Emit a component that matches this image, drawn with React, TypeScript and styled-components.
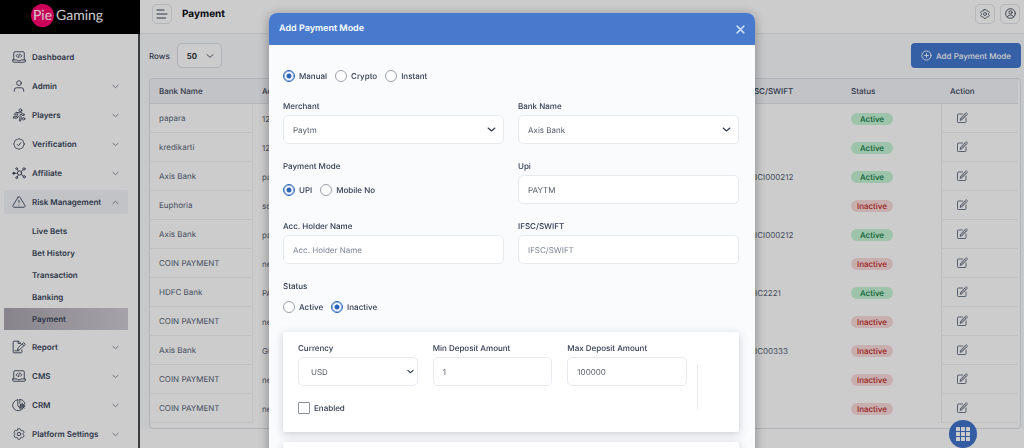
import React from "react";
import styled, { createGlobalStyle, css } from "styled-components";
import { HiOutlineCheckBadge, HiOutlineCog6Tooth } from "react-icons/hi2";
import { FiAlertTriangle, FiUser } from "react-icons/fi";

const Global = createGlobalStyle`
  *, *::before, *::after { box-sizing: border-box; }
  html { height: 100%; }
  body {
    margin: 0;
    min-height: 100%;
    background: #fff;
    overflow: hidden;
    font-family: Inter, "Liberation Sans", sans-serif;
    font-size: 8px;
    line-height: 12px;
    color: #3a4458;
    text-rendering: geometricPrecision;
  }
  #root { height: 100vh; }
  button, input, select { font: inherit; color: inherit; margin: 0; text-rendering: inherit; }
  ul { list-style: none; margin: 0; padding: 0; }
  svg { display: block; flex: none; }
`;

/* ---------- shell ---------- */

const Shell = styled.div`
  display: flex;
  height: 100vh;
  overflow: hidden;
`;

const Sidebar = styled.aside`
  flex: none;
  width: 140px;
  border-right: 2px solid #4c4c4e;
  background: #fff;
`;

const Brand = styled.a`
  display: flex;
  align-items: center;
  gap: 2px;
  height: 34px;
  margin-right: -2px;
  padding: 0 0 4px 31px;
  background: #000;
  color: #fff;
  text-decoration: none;
  font-family: Lato, sans-serif;
  font-size: 14px;
  line-height: 16px;
`;

const BrandMark = styled.span`
  display: flex;
  align-items: center;
  justify-content: center;
  width: 23px;
  height: 23px;
  border-radius: 50%;
  background: #ff0070;
`;

const NavList = styled.ul`
  && {
    display: flex;
    flex-direction: column;
    gap: 5px;
    padding: 11px 10px 0 4px;
  }
`;

const NavButton = styled.button<{ $open?: boolean }>`
  display: flex;
  align-items: center;
  width: 100%;
  height: 24px;
  padding: 0 9px 0 8px;
  border: 0;
  border-radius: 2px;
  background: ${(p) => (p.$open ? "#f3f4f8" : "transparent")};
  font-weight: 600;
  text-align: left;
  white-space: nowrap;

  & > span { flex: 1; margin-left: 6px; }
`;

const SubList = styled.ul`
  && { padding-top: 1px; }
`;

const SubLink = styled.a<{ $active?: boolean }>`
  display: flex;
  align-items: center;
  height: 22px;
  padding-left: 28px;
  color: inherit;
  font-weight: 600;
  text-decoration: none;
  ${(p) =>
    p.$active &&
    css`
      background: linear-gradient(90deg, #a9a5ae, #cfccd4);
    `}
`;

const Main = styled.main`
  flex: 1;
  min-width: 0;
  background: #fff;
`;

const TopBar = styled.header`
  display: flex;
  align-items: center;
  gap: 5px;
  height: 34px;
  padding: 0 4px 6px 12px;
  border-bottom: 1px solid #ececf0;
`;

const IconButton = styled.button`
  display: flex;
  align-items: center;
  justify-content: center;
  width: 20px;
  height: 20px;
  padding: 0;
  border: 1px solid #e4e5ea;
  border-radius: 5px;
  background: transparent;
`;

const PageTitle = styled.h1`
  flex: 1;
  margin: 0 0 0 5px;
  font-size: 10px;
  line-height: 16px;
  font-weight: 700;
  color: #0b0b14;
`;

const Content = styled.section`
  padding: 9px 3px 0 9px;
  background: #f8fafc;
`;

const Toolbar = styled.div`
  display: flex;
  align-items: center;
  justify-content: space-between;
  margin-bottom: 10px;
`;

const RowsLabel = styled.label`
  display: flex;
  align-items: center;
  gap: 7px;
  font-weight: 500;
`;

const AddButton = styled.button`
  display: flex;
  align-items: center;
  gap: 4px;
  height: 25px;
  padding: 0 10px;
  border: 0;
  border-radius: 4px;
  background: #4478d0;
  color: #fff;
  font-weight: 500;
  white-space: nowrap;
`;

/* ---------- table ---------- */

const TableCard = styled.div`
  padding: 0 2px 5px 0;
  border: 1px solid #dfe0e6;
  border-radius: 4px;
  background: #fff;
  overflow: hidden;
`;

const Table = styled.table`
  width: 100%;
  border-collapse: separate;
  border-spacing: 0;
  table-layout: fixed;
`;

const Th = styled.th`
  height: 25px;
  padding: 0 0 0 9px;
  background: #f3f4f9;
  border-bottom: 1px solid #e3e4ea;
  font-weight: 500;
  text-align: left;
  white-space: nowrap;
`;

const Td = styled.td`
  height: 29px;
  padding: 0 0 0 9px;
  font-weight: 400;
  color: #566074;
  white-space: nowrap;
`;

const edge = css`
  border-bottom: 1px solid #f3f3f6;
`;
const FirstTd = styled(Td)`
  ${edge}
  border-right: 1px solid #f3f3f6;
`;
const LastTd = styled(Td)`
  ${edge}
  border-left: 1px solid #ececf0;
`;

const Pill = styled.span<{ $active: boolean }>`
  display: block;
  width: 42px;
  border-radius: 6px;
  text-align: center;
  font-weight: 500;
  line-height: 12px;
  background: ${(p) => (p.$active ? "#c5f4d5" : "#fbdbdb")};
  color: ${(p) => (p.$active ? "#0d7a45" : "#c01f24")};
`;

const EditButton = styled.button`
  display: block;
  margin-left: 5px;
  padding: 0;
  border: 0;
  background: transparent;
  color: #566074;
`;

const Fab = styled.button`
  position: fixed;
  right: 47px;
  bottom: 0;
  display: flex;
  align-items: center;
  justify-content: center;
  width: 28px;
  height: 28px;
  padding: 0;
  border: 0;
  border-radius: 50%;
  background: #4074cc;
  color: #fff;
`;

/* ---------- dialog ---------- */

const Overlay = styled.div`
  position: fixed;
  inset: 0;
  display: flex;
  justify-content: center;
  align-items: flex-start;
  padding-top: 13px;
  background: rgba(0, 0, 0, 0.2);
  overflow: hidden;
`;

const Dialog = styled.div`
  width: calc(100% - 32px);
  max-width: 486px;
  border-radius: 8px;
  background: #fafbfd;
  box-shadow: 0 2px 12px rgba(0, 0, 0, 0.35);
  color: #2f3a4f;
`;

const DialogHead = styled.div`
  display: flex;
  align-items: center;
  justify-content: space-between;
  height: 32px;
  padding: 0 10px;
  border-radius: 8px 8px 0 0;
  background: #477acd;
  color: #fff;
`;

const DialogTitle = styled.h2`
  margin: 0;
  font-size: 9px;
  line-height: 14px;
  font-weight: 600;
`;

const CloseButton = styled.button`
  padding: 0;
  border: 0;
  background: transparent;
  color: #cfdef8;
`;

const Form = styled.form`
  padding: 25px 16px 20px 14px;
`;

const RadioRow = styled.div<{ $height: number }>`
  display: flex;
  align-items: center;
  gap: 8px;
  height: ${(p) => p.$height}px;
`;

const RadioLabel = styled.label`
  display: flex;
  align-items: center;
  gap: 4px;
  font-weight: 500;
`;

const Radio = styled.input`
  appearance: none;
  width: 12px;
  height: 12px;
  border: 1px solid #9a9fa8;
  border-radius: 50%;
  background: #fff;

  &:checked {
    border-color: #2a62b8;
    background: radial-gradient(circle, #2a62b8 0 2px, #fff 3px);
    box-shadow: inset 0 0 0 1px #8eaddc;
  }
`;

const FieldGrid = styled.div`
  display: grid;
  grid-template-columns: 1fr 1fr;
  gap: 16px 14px;
  margin: 18px 0 13px;
`;

const Field = styled.div`
  min-width: 0;
`;

const Caption = styled.label`
  display: block;
  margin-bottom: 3px;
  font-weight: 500;
`;

const box = css`
  width: 100%;
  height: 29px;
  padding: 0 9px;
  border: 1px solid #e6e9ee;
  border-radius: 5px;
  background: #fff;
  color: #555c69;
  outline: none;
`;

const TextInput = styled.input`
  ${box}
  &::placeholder { color: #7b8494; opacity: 1; }
`;

const SelectWrap = styled.div<{ $right: number }>`
  position: relative;
  display: flex;
  align-items: center;

  & > svg {
    position: absolute;
    right: ${(p) => p.$right}px;
    pointer-events: none;
  }
`;

const Select = styled.select<{ $inset?: boolean }>`
  ${box}
  appearance: none;
  padding-left: ${(p) => (p.$inset ? 12 : 9)}px;
`;

const RowsSelect = styled(Select)`
  width: 45px;
  height: 25px;
  border-color: #dddfe5;
  font-weight: 600;
  color: #15171f;
`;

const CurrencyCard = styled.section`
  display: grid;
  grid-template-columns: 1fr 42px;
  min-height: 100px;
  margin-bottom: 10px;
  padding: 10px 0 18px 15px;
  border-radius: 2px;
  background: #fff;
  box-shadow: 0 2px 9px rgba(30, 40, 60, 0.22);
`;

const CurrencyFields = styled.div`
  display: grid;
  grid-template-columns: repeat(3, 1fr);
  gap: 15px;
  padding-right: 10px;
`;

const Divider = styled.div`
  height: 46px;
  margin-top: 22px;
  border-left: 1px solid #e9ebf0;
`;

const CheckLabel = styled.label`
  display: flex;
  align-items: center;
  gap: 4px;
  font-weight: 500;
`;

const Checkbox = styled.input`
  appearance: none;
  width: 12px;
  height: 12px;
  border: 1px solid #8f96a3;
  border-radius: 1px;
  background: #fff;
`;

/* ---------- icons ---------- */

type GlyphProps = { size?: number; weight?: number; children: React.ReactNode };
const Glyph = ({ size = 14, weight = 1.5, children }: GlyphProps) => (
  <svg width={size} height={size} viewBox="0 0 24 24" fill="none" stroke="currentColor"
    strokeWidth={weight} strokeLinecap="round" strokeLinejoin="round" aria-hidden="true">
    {children}
  </svg>
);

const Chevron = ({ up, size = 8, weight = 2 }: { up?: boolean; size?: number; weight?: number }) => (
  <Glyph size={size} weight={weight}>
    <path d={up ? "M3 16l9-8 9 8" : "M3 8l9 8 9-8"} />
  </Glyph>
);

const LaptopCode = () => (
  <Glyph>
    <path d="M3 17V5a2 2 0 0 1 2-2h14a2 2 0 0 1 2 2v12M1 17h8l1 1.5h4l1-1.5h8v2a2 2 0 0 1-2 2H3a2 2 0 0 1-2-2z" />
    <path d="M9.500 7.500L7 10l2.500 2.500M14.500 7.500L17 10l-2.500 2.500M12.700 7l-1.400 6" />
  </Glyph>
);

const Runner = () => (
  <Glyph weight={1.6}>
    <circle cx="14.500" cy="4" r="2.400" />
    <path d="M12.500 8L7 7.500 3.500 11l1.500 1.500L8 10h2l-2.500 5H2.500v2.300h6.300l2-3.300 3 2.700-1.300 5 2.200.8 1.800-6.700-3-3.300 1.500-2.500 2 2.500h4V10.200h-3L15.500 7z" />
    <circle cx="20" cy="18.500" r="2" />
  </Glyph>
);

const Network = () => (
  <Glyph>
    <circle cx="13" cy="12" r="3.600" />
    <circle cx="3" cy="12.500" r="1.700" fill="currentColor" />
    <circle cx="8" cy="4.500" r="1.600" />
    <circle cx="20.500" cy="5" r="2" />
    <circle cx="21" cy="18.500" r="2" />
    <circle cx="8" cy="20" r="1.600" />
    <path d="M4.700 12.500h4.700M9 6l2 3M15.600 9.500l3.300-3M15.800 14.400l3.600 2.900M9 18.600l2-3.300" />
  </Glyph>
);

const FilePen = () => (
  <Glyph>
    <path d="M14 6V4.500L11.500 2H3.500A1.500 1.500 0 0 0 2 3.500v17A1.500 1.500 0 0 0 3.500 22h12a1.500 1.500 0 0 0 1.500-1.500V17M10.500 2.500V6H14" />
    <path d="M9.500 17l1-4L20 4.500l3 3L13.500 16zM17.500 7l3 3M5 18.500h7" />
  </Glyph>
);

const PieGear = () => (
  <Glyph>
    <path d="M10 3a9.500 9.500 0 1 0 6 17.300M10 3v10l5 6.500M13.500 2.500a9 9 0 0 1 8.500 7.500M13.500 2.500V9" />
    <circle cx="17.500" cy="14" r="1.600" />
    <path d="M17.500 9v1.500M17.500 17.500V19M13 14h1.300M20.700 14H22M14.300 10.800l1 1M19.800 16.300l1 1M20.700 10.800l-1 1M15.300 16.300l-1 1" />
    <circle cx="17.500" cy="14" r="3.500" />
  </Glyph>
);

const Pencil = () => (
  <Glyph size={12} weight={1.7}>
    <path d="M13 4H4.500A1.500 1.500 0 0 0 3 5.500v14A1.500 1.500 0 0 0 4.500 21h14a1.500 1.500 0 0 0 1.500-1.500V12" />
    <path d="M8.500 16l.7-3.700L19.500 2.200a1.500 1.500 0 0 1 2.200 0l.5.5a1.500 1.500 0 0 1 0 2.200L12.200 15.200zM17.300 4.500l2.700 2.700M10 15l7-7" />
  </Glyph>
);

const GridDots = () => (
  <svg width="14" height="14" viewBox="0 0 14 14" fill="currentColor" aria-hidden="true">
    {[0, 5, 10].map((y) => [0, 5, 10].map((x) => <rect key={`${x}-${y}`} x={x} y={y} width="4" height="4" rx="0.500" />))}
  </svg>
);

/* ---------- data ---------- */

const before = [
  { label: "Dashboard", icon: <LaptopCode />, leaf: true },
  { label: "Admin", icon: <FiUser size={14} strokeWidth={1.5} /> },
  { label: "Players", icon: <Runner /> },
  { label: "Verification", icon: <HiOutlineCheckBadge size={14} /> },
  { label: "Affiliate", icon: <Network /> },
];
const after = [
  { label: "Report", icon: <FilePen /> },
  { label: "CMS", icon: <LaptopCode /> },
  { label: "CRM", icon: <PieGear /> },
  { label: "Platform Settings", icon: <HiOutlineCog6Tooth size={14} /> },
];
const children = ["Live Bets", "Bet History", "Transaction", "Banking", "Payment"];

const rows: [string, string, string, boolean][] = [
  ["papara", "1234", "", true],
  ["kredikarti", "1234", "", true],
  ["Axis Bank", "paytm", "ICICI000212", true],
  ["Euphoria", "sol", "", false],
  ["Axis Bank", "paytm", "ICICI000212", true],
  ["COIN PAYMENT", "new", "", false],
  ["HDFC Bank", "PAY", "ICIC2221", true],
  ["COIN PAYMENT", "new", "", false],
  ["Axis Bank", "GOV", "ICIC00333", false],
  ["COIN PAYMENT", "new", "", false],
  ["COIN PAYMENT", "new", "", false],
];

type NavEntry = { label: string; icon: React.ReactNode; leaf?: boolean };
const NavItem = ({ label, icon, leaf }: NavEntry) => (
  <li>
    <NavButton type="button">
      {icon}
      <span>{label}</span>
      {!leaf && <Chevron size={7} />}
    </NavButton>
  </li>
);

const RadioOption = ({ name, label, checked }: { name: string; label: string; checked?: boolean }) => (
  <RadioLabel>
    <Radio type="radio" name={name} defaultChecked={checked} />
    {label}
  </RadioLabel>
);

const TextField = ({ id, label, ...rest }: { id: string; label: string } & React.InputHTMLAttributes<HTMLInputElement>) => (
  <Field>
    <Caption htmlFor={id}>{label}</Caption>
    <TextInput id={id} type="text" {...rest} />
  </Field>
);

const SelectField = ({ id, label, value, small }: { id: string; label: string; value: string; small?: boolean }) => (
  <Field>
    <Caption htmlFor={id}>{label}</Caption>
    <SelectWrap $right={small ? 4 : 8}>
      <Select id={id} $inset={small}>
        <option>{value}</option>
      </Select>
      <Chevron size={small ? 7 : 9} weight={small ? 4 : 3} />
    </SelectWrap>
  </Field>
);

export default function App() {
  return (
    <>
      <Global />
      <Shell>
        <Sidebar>
          <Brand href="#">
            <BrandMark>Pie</BrandMark>
            Gaming
          </Brand>
          <nav>
            <NavList>
              {before.map((n) => <NavItem key={n.label} {...n} />)}
              <li>
                <NavButton type="button" $open aria-expanded="true">
                  <FiAlertTriangle size={14} strokeWidth={1.5} />
                  <span>Risk Management</span>
                  <Chevron up size={7} />
                </NavButton>
              </li>
              <li>
                <SubList>
                  {children.map((c) => (
                    <li key={c}><SubLink href="#" $active={c === "Payment"}>{c}</SubLink></li>
                  ))}
                </SubList>
              </li>
              {after.map((n) => <NavItem key={n.label} {...n} />)}
            </NavList>
          </nav>
        </Sidebar>

        <Main>
          <TopBar>
            <IconButton type="button" aria-label="Toggle menu">
              <Glyph size={12} weight={2.4}><path d="M2 4h14M2 12h20M2 20h17" /></Glyph>
            </IconButton>
            <PageTitle>Payment</PageTitle>
            <IconButton type="button" aria-label="Settings"><HiOutlineCog6Tooth size={12} /></IconButton>
            <IconButton type="button" aria-label="Profile">
              <Glyph size={11} weight={2}>
                <circle cx="12" cy="12" r="10.500" />
                <circle cx="12" cy="9.500" r="3.500" />
                <path d="M5.500 19.500c1-3 3.500-4 6.500-4s5.500 1 6.500 4" />
              </Glyph>
            </IconButton>
          </TopBar>
          <Content>
            <Toolbar>
              <RowsLabel>
                Rows
                <SelectWrap $right={8}>
                  <RowsSelect><option>50</option></RowsSelect>
                  <Chevron size={8} weight={2.5} />
                </SelectWrap>
              </RowsLabel>
              <AddButton type="button">
                <Glyph size={11} weight={2}>
                  <circle cx="12" cy="12" r="10" />
                  <path d="M12 8v8M8 12h8" />
                </Glyph>
                Add Payment Mode
              </AddButton>
            </Toolbar>
            <TableCard>
              <Table>
                <colgroup>
                  <col style={{ width: 103 }} />
                  <col />
                  <col style={{ width: 104 }} />
                  <col style={{ width: 99 }} />
                  <col style={{ width: 77 }} />
                </colgroup>
                <thead>
                  <tr>
                    <Th>Bank Name</Th>
                    <Th>Acc</Th>
                    <Th>IFSC/SWIFT</Th>
                    <Th>Status</Th>
                    <Th>Action</Th>
                  </tr>
                </thead>
                <tbody>
                  {rows.map(([bank, account, code, active], i) => (
                    <tr key={i}>
                      <FirstTd>{bank}</FirstTd>
                      <Td>{account}</Td>
                      <Td>{code}</Td>
                      <Td><Pill $active={active}>{active ? "Active" : "Inactive"}</Pill></Td>
                      <LastTd><EditButton type="button" aria-label="Edit"><Pencil /></EditButton></LastTd>
                    </tr>
                  ))}
                </tbody>
              </Table>
            </TableCard>
          </Content>
        </Main>
      </Shell>
      <Fab type="button" aria-label="Apps"><GridDots /></Fab>

      <Overlay>
        <Dialog role="dialog" aria-labelledby="dialog-title">
          <DialogHead>
            <DialogTitle id="dialog-title">Add Payment Mode</DialogTitle>
            <CloseButton type="button" aria-label="Close">
              <Glyph size={9} weight={4}><path d="M3 3l18 18M21 3L3 21" /></Glyph>
            </CloseButton>
          </DialogHead>
          <Form>
            <RadioRow $height={12}>
              <RadioOption name="kind" label="Manual" checked />
              <RadioOption name="kind" label="Crypto" />
              <RadioOption name="kind" label="Instant" />
            </RadioRow>
            <FieldGrid>
              <SelectField id="merchant" label="Merchant" value="Paytm" />
              <SelectField id="bank" label="Bank Name" value="Axis Bank" />
              <Field>
                <Caption as="div">Payment Mode</Caption>
                <RadioRow $height={29}>
                  <RadioOption name="mode" label="UPI" checked />
                  <RadioOption name="mode" label="Mobile No" />
                </RadioRow>
              </Field>
              <TextField id="upi" label="Upi" defaultValue="PAYTM" />
              <TextField id="holder" label="Acc. Holder Name" placeholder="Acc. Holder Name" />
              <TextField id="ifsc" label="IFSC/SWIFT" placeholder="IFSC/SWIFT" />
              <Field>
                <Caption as="div">Status</Caption>
                <RadioRow $height={24}>
                  <RadioOption name="status" label="Active" />
                  <RadioOption name="status" label="Inactive" checked />
                </RadioRow>
              </Field>
            </FieldGrid>
            <CurrencyCard>
              <CurrencyFields>
                <SelectField id="currency" label="Currency" value="USD" small />
                <TextField id="min" label="Min Deposit Amount" defaultValue="1" />
                <TextField id="max" label="Max Deposit Amount" defaultValue="100000" />
                <CheckLabel><Checkbox type="checkbox" />Enabled</CheckLabel>
              </CurrencyFields>
              <Divider />
            </CurrencyCard>
            <CurrencyCard />
          </Form>
        </Dialog>
      </Overlay>
    </>
  );
}
